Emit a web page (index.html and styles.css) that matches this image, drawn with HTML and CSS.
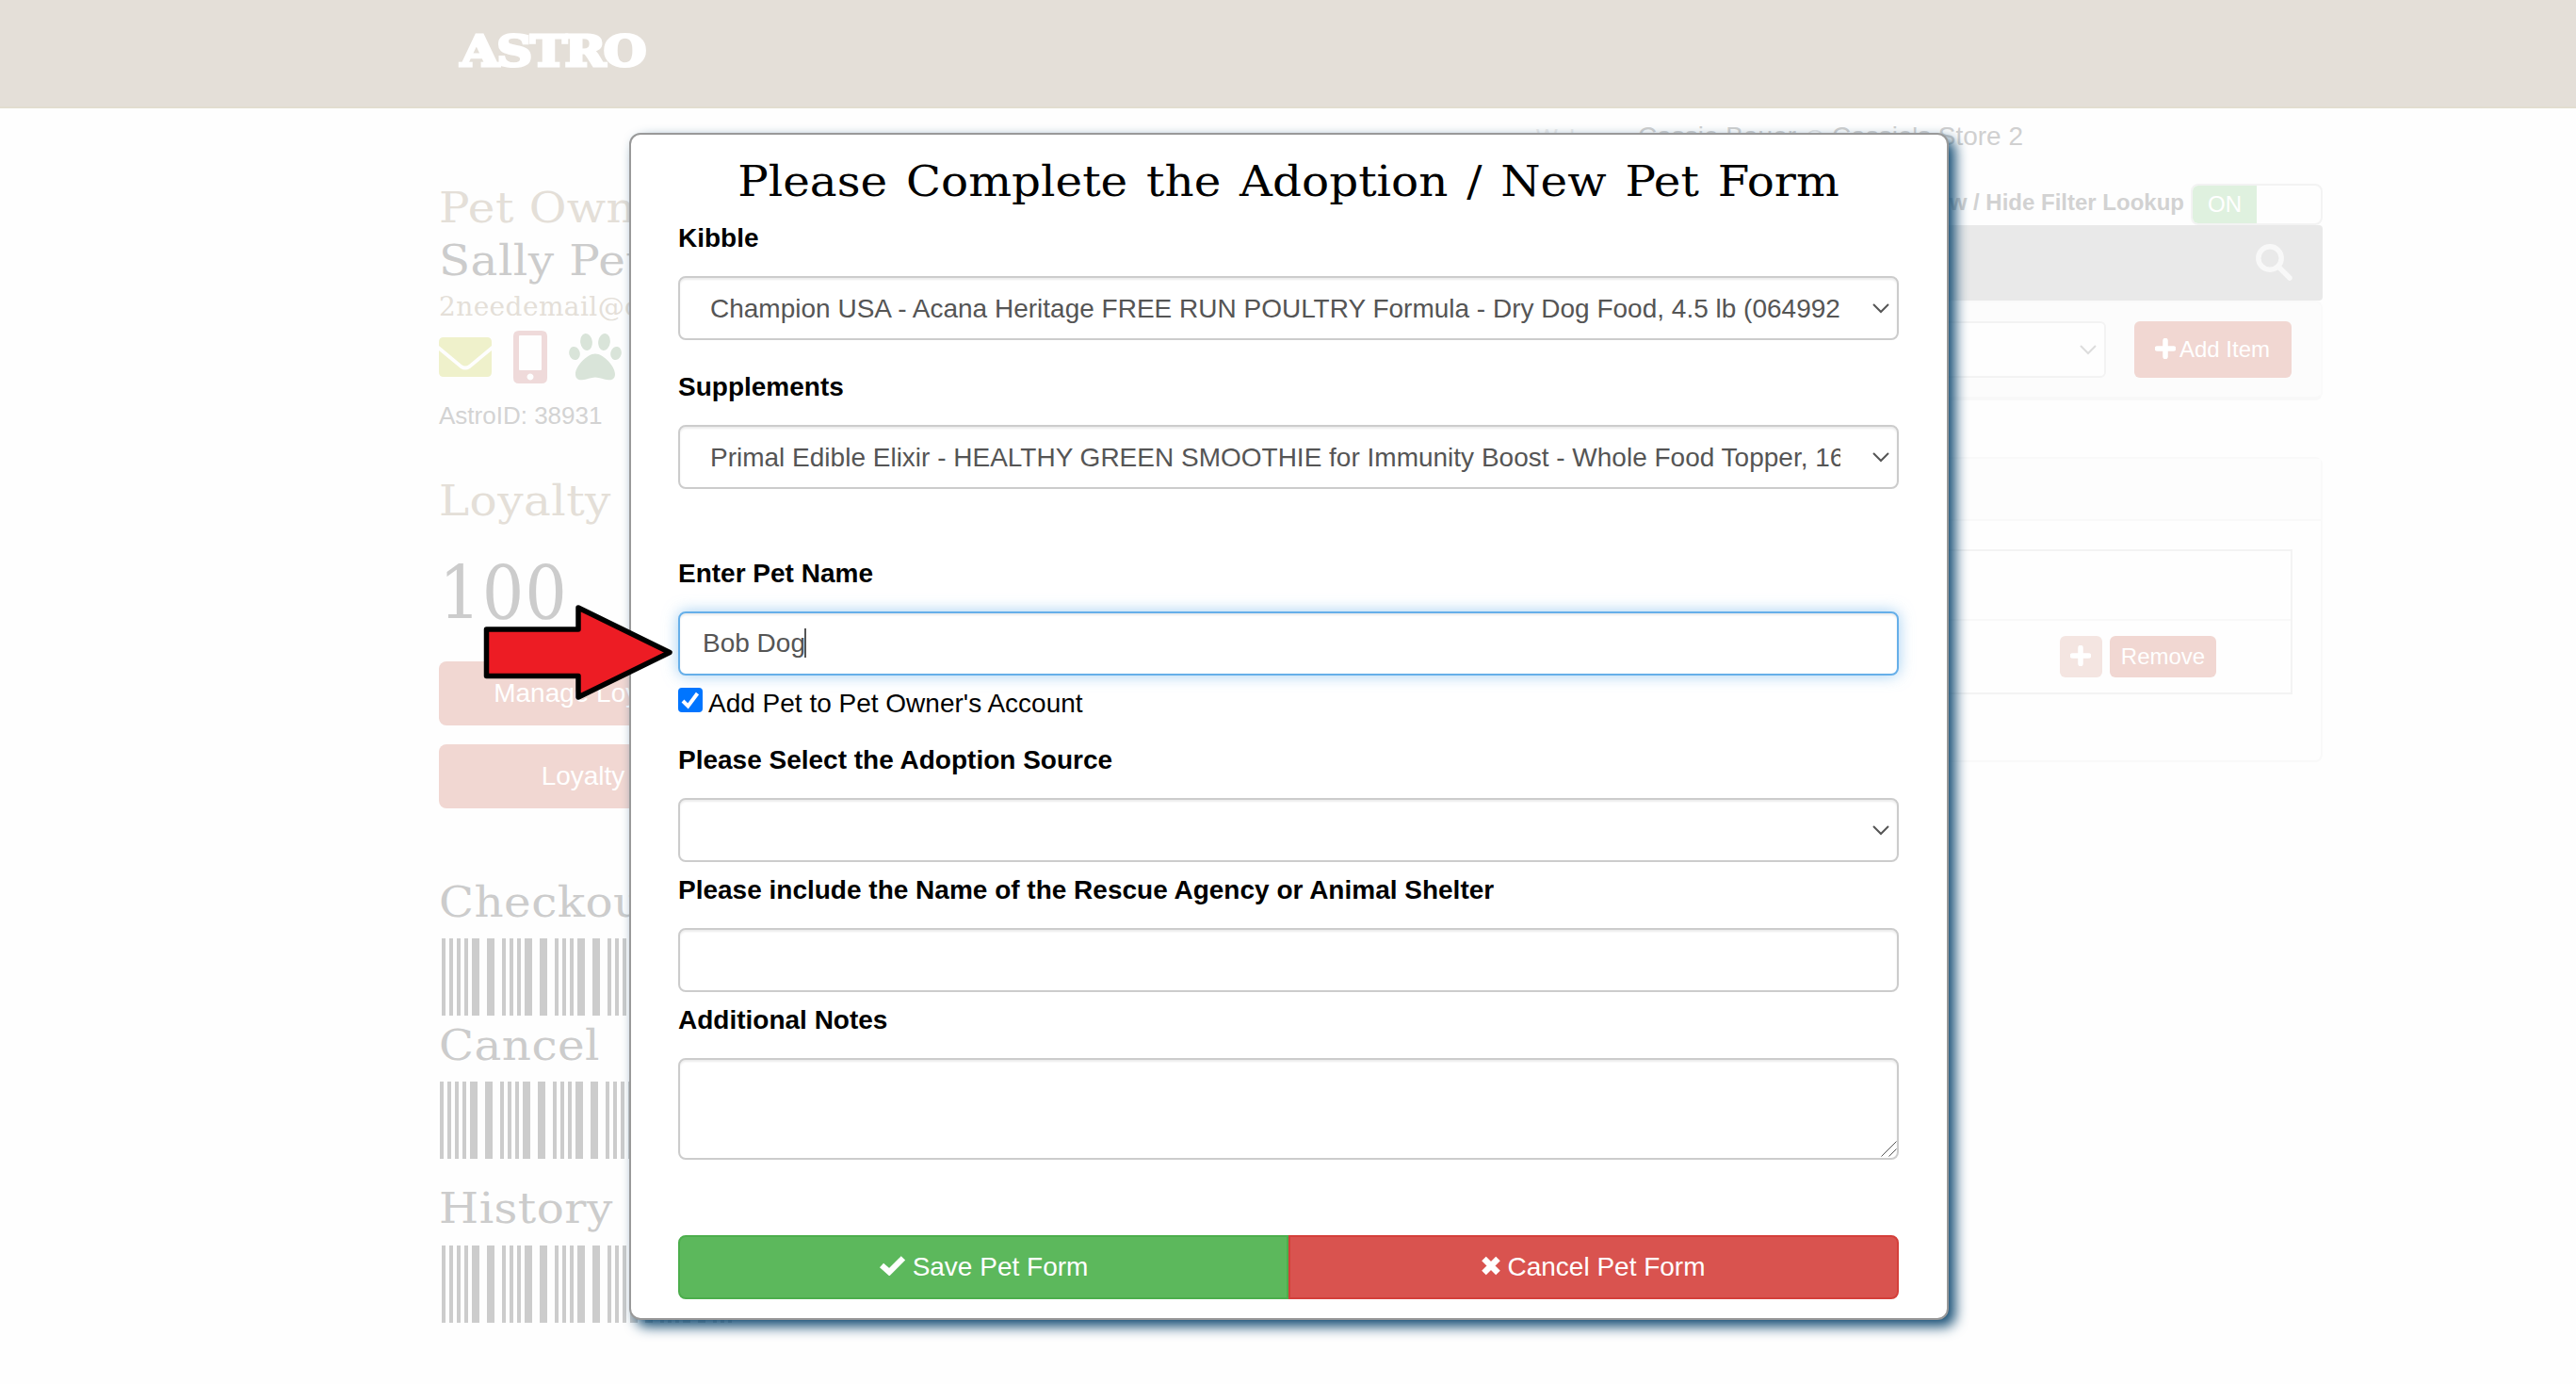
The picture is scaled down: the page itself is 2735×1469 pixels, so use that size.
FILE: index.html
```
<!DOCTYPE html>
<html lang="en">
<head>
    <meta charset="UTF-8">
    <title>Astro</title>
    <link rel="stylesheet" href="styles.css">
</head>
<body>

    <header class="navbar">
        <span class="logo">ASTRO</span>
    </header>

    <p class="welcome"><small>Welcome,</small> <span>Cassie Bauer <i>@</i> Cassie's Store 2</span></p>

    <div class="container">
        <aside class="sidebar">
            <h2 class="tan">Pet Owner</h2>
            <h2>Sally Pet</h2>
            <h4 class="tan">2needemail@c</h4>
            <div class="contact-icons">
                <svg class="icon-mail" viewBox="0 0 56 42"><path d="M5 0H51Q56 0 56 5V9L32 29Q28 32 24 29L0 9V5Q0 0 5 0ZM0 14L23 33Q28 36 33 33L56 14V37Q56 42 51 42H5Q0 42 0 37Z"/></svg>
                <svg class="icon-phone" viewBox="0 0 36 56"><path fill-rule="evenodd" d="M6 0H30Q36 0 36 6V50Q36 56 30 56H6Q0 56 0 50V6Q0 0 6 0ZM7 5Q6 5 6 6V41Q6 42 7 42H29Q30 42 30 41V6Q30 5 29 5ZM18 45.500a3.500 3.500 0 1 0 .01 0Z"/></svg>
                <svg class="icon-paw" viewBox="0 0 56 50"><ellipse cx="18.500" cy="9" rx="6.300" ry="9" transform="rotate(-8 18.500 9)"/><ellipse cx="37.500" cy="9" rx="6.300" ry="9" transform="rotate(8 37.500 9)"/><ellipse cx="6" cy="21" rx="5.700" ry="7.200" transform="rotate(-15 6 21)"/><ellipse cx="50" cy="21" rx="5.700" ry="7.200" transform="rotate(15 50 21)"/><path d="M28 21.500C37 21.500 49 35 49 43C49 48 46 49.500 42 49.200C37 49 33 46.500 28 46.500S19 49 14 49.200C10 49.500 7 48 7 43C7 35 19 21.500 28 21.500Z"/></svg>
            </div>
            <p class="astro-id">AstroID: 38931</p>

            <h2 class="tan loyalty">Loyalty</h2>
            <div class="points">100</div>
            <a class="btn-side manage">Manage Loyalty</a>
            <a class="btn-side">Loyalty</a>

            <h2 class="checkout">Checkout</h2>
            <div class="barcode"></div>
            <h2 class="cancel">Cancel</h2>
            <div class="barcode shifted"></div>
            <h2 class="history">History</h2>
            <div class="barcode last"></div>
        </aside>

        <main class="content">
            <div class="filter-toggle">
                <b>Show / Hide Filter Lookup</b>
                <span class="toggle"><span>ON</span></span>
            </div>
            <div class="search-bar">
                <svg viewBox="0 0 40 40"><circle cx="15" cy="15" r="12.200"/><path d="M24 24L36 36"/></svg>
            </div>
            <div class="add-panel">
                <div class="item-select">
                    <svg class="chevron" viewBox="0 0 18 11"><path d="M1 1L9 9L17 1"/></svg>
                </div>
                <a class="btn-add"><svg class="plus" viewBox="0 0 22 22"><path d="M11 2.500V19.500M2.500 11H19.500"/></svg>Add Item</a>
            </div>
            <div class="items-panel">
                <div class="items-heading"></div>
                <div class="items-table">
                    <div class="items-row"></div>
                    <div class="items-row odd">
                        <a class="btn-sm light"><svg class="plus" viewBox="0 0 22 22"><path d="M11 2.500V19.500M2.500 11H19.500"/></svg></a>
                        <a class="btn-sm">Remove</a>
                    </div>
                </div>
            </div>
        </main>
    </div>

    <!-- adoption / new pet dialog -->
    <form class="modal">
        <h2>Please Complete the Adoption / New Pet Form</h2>

        <label class="first">Kibble</label>
        <div class="select-wrap">
            <select class="form-control"><option>Champion USA - Acana Heritage FREE RUN POULTRY Formula - Dry Dog Food, 4.5 lb (064992</option></select>
            <svg class="chevron" viewBox="0 0 18 11"><path d="M1 1L9 9L17 1"/></svg>
        </div>

        <label class="supplements">Supplements</label>
        <div class="select-wrap">
            <select class="form-control"><option>Primal Edible Elixir - HEALTHY GREEN SMOOTHIE for Immunity Boost - Whole Food Topper, 16 oz</option></select>
            <svg class="chevron" viewBox="0 0 18 11"><path d="M1 1L9 9L17 1"/></svg>
        </div>

        <label class="pet-name">Enter Pet Name</label>
        <div class="form-control focused">Bob Dog<span class="caret"></span></div>

        <div class="checkbox">
            <svg viewBox="0 0 26 26"><rect width="26" height="26" rx="4"/><path d="M5 14L10.500 19.500L20.500 6"/></svg>
            <span>Add Pet to Pet Owner's Account</span>
        </div>

        <label class="source">Please Select the Adoption Source</label>
        <div class="select-wrap">
            <select class="form-control"><option></option></select>
            <svg class="chevron" viewBox="0 0 18 11"><path d="M1 1L9 9L17 1"/></svg>
        </div>

        <label>Please include the Name of the Rescue Agency or Animal Shelter</label>
        <input class="form-control" type="text">

        <label>Additional Notes</label>
        <div class="notes-wrap">
            <textarea class="form-control notes"></textarea>
            <svg class="grip" viewBox="0 0 17 17"><path d="M.5 16.500L16.500 .5M8.500 16.500L16.500 8.500"/></svg>
        </div>

        <div class="btn-group">
            <a class="btn-save"><svg viewBox="0 0 29 22"><path d="M2.500 10.500L11 18L26.500 2.500"/></svg>Save Pet Form</a>
            <a class="btn-cancel"><svg viewBox="0 0 20 21"><path d="M2.500 3L17.500 18M17.500 3L2.500 18"/></svg>Cancel Pet Form</a>
        </div>
    </form>

    <svg class="arrow" viewBox="0 0 204 106"><path d="M4.500 29H102V6L199 53.500L102 101V78.500H4.500Z"/></svg>

</body>
</html>
```

FILE: styles.css
```
* {
    box-sizing: border-box;
}

body {
    margin: 0;
    height: 1469px;
    overflow: hidden;
    position: relative;
    background: #fefefe;
    font-family: "Liberation Sans", Arial, sans-serif;
    font-size: 28px;
    color: #000;
}

h2, h4, p {
    margin: 0;
    font-weight: normal;
}

h2, h4 {
    font-family: "DejaVu Serif", serif;
    white-space: nowrap;
}

h2 {
    font-size: 44px;
    line-height: 57px;
    height: 56px;
    letter-spacing: .4px;
    transform: scaleX(1.1);
    transform-origin: left;
}

svg {
    display: block;
}

.navbar {
    height: 115px;
    padding: 25px 0 0 489px;
    background: #e4dfd8;
    border-bottom: 2px solid #e2ddd0;
}

.logo {
    display: inline-block;
    font: bold 45px/60px "DejaVu Serif", serif;
    letter-spacing: -2px;
    color: #fff;
    -webkit-text-stroke: 3px #fff;
    transform: scaleX(1.165);
    transform-origin: left;
}

.welcome {
    display: flex;
    align-items: baseline;
    height: 64px;
    padding: 12px 0 0 1631px;
    line-height: 36px;
    color: #d0d0d0;
    white-space: pre;
}

.welcome small {
    width: 108px;
    font-size: 24px;
    color: #ececec;
}

.welcome i {
    font-style: normal;
    font-size: 22px;
    color: #e4e4e4;
}

.container {
    display: flex;
    justify-content: space-between;
    width: 2000px;
    margin-left: 466px;
}

/* sidebar */
.sidebar {
    width: 460px;
    padding-top: 13px;
    color: #ccc;
}

.tan {
    color: #e4dfd8;
}

h4 {
    font-size: 28px;
    line-height: 44px;
    letter-spacing: .4px;
}

.contact-icons {
    display: flex;
    height: 60px;
}

.icon-mail {
    width: 56px;
    height: 42px;
    margin-top: 10px;
    fill: #eff1cb;
}

.icon-phone {
    width: 36px;
    height: 56px;
    margin: 3px 23px 0;
    fill: #efdada;
}

.icon-paw {
    width: 56px;
    height: 50px;
    margin-top: 6px;
    fill: #d9e4d9;
}

.astro-id {
    margin-top: 13px;
    font-size: 26px;
    line-height: 40px;
    color: #d3d3d3;
}

.loyalty {
    margin-top: 42px;
}

.points {
    margin: 26px 0 27px;
    font-family: "DejaVu Serif Condensed", "DejaVu Serif", serif;
    font-stretch: condensed;
    font-size: 78px;
    line-height: 90px;
    letter-spacing: 1px;
}

.btn-side {
    display: block;
    height: 68px;
    margin-bottom: 20px;
    border-radius: 8px;
    background: #f1d7d2;
    color: #fff;
    line-height: 68px;
    text-align: center;
    width: 306px;
}

.manage {
    padding-left: 8px;
}

.checkout {
    margin-top: 71px;
}

.cancel {
    margin-top: 3px;
}

.history {
    margin-top: 24px;
}

.barcode {
    width: 312px;
    height: 82px;
    margin: 11px 0 0 3px;
    padding-left: 8px;
    background:
        linear-gradient(#ccc, #ccc) 0 0 / 4px 100% no-repeat padding-box,
        repeating-linear-gradient(90deg, #ccc 0 4px, #fefefe 4px 8px, #ccc 8px 12px, #fefefe 12px 16px, #ccc 16px 20px, #fefefe 20px 24px, #ccc 24px 32px, #fefefe 32px 40px, #ccc 40px 48px, #fefefe 48px 56px) 0 0 content-box;
}

.shifted {
    margin-left: 1px;
}

.last {
    margin-top: 12px;
}

/* right side */
.content {
    width: 1300px;
    padding-top: 16px;
}

.filter-toggle {
    display: flex;
    justify-content: flex-end;
    height: 44px;
    font-size: 24px;
    line-height: 40px;
    color: #d2d2d2;
}

.toggle {
    width: 140px;
    height: 44px;
    margin-left: 7px;
    border: 2px solid #f3f3f3;
    border-radius: 8px;
    overflow: hidden;
}

.toggle span {
    display: block;
    width: 68px;
    height: 40px;
    background: #dff1df;
    color: #fff;
    text-align: center;
    line-height: 40px;
}

.search-bar {
    display: flex;
    justify-content: flex-end;
    height: 80px;
    padding: 20px 31px;
    border-radius: 4px;
    background: #e9e9e9;
}

.search-bar svg {
    width: 40px;
    height: 40px;
    fill: none;
    stroke: #f8f8f8;
    stroke-width: 5.5;
    stroke-linecap: round;
}

.add-panel {
    display: flex;
    justify-content: flex-end;
    gap: 30px;
    height: 106px;
    padding: 20px 31px 0;
    border: 2px solid #fafafa;
    border-bottom: 4px solid #f8f8f8;
    border-radius: 8px;
    background: #fcfcfc;
}

.item-select {
    display: flex;
    justify-content: flex-end;
    width: 700px;
    height: 60px;
    padding: 23px 8px;
    border: 2px solid #f3f3f3;
    border-radius: 6px;
    background: #fefefe;
}

.chevron {
    width: 18px;
    height: 11px;
    fill: none;
    stroke: #555;
    stroke-width: 2;
}

.item-select .chevron {
    stroke: #ddd;
}

.plus {
    width: 22px;
    height: 22px;
    stroke: #fff;
    stroke-width: 5.5;
    stroke-linecap: round;
}

.btn-add {
    display: flex;
    width: 167px;
    height: 60px;
    padding: 18px 0 0 22px;
    gap: 4px;
    border-radius: 6px;
    background: #f1d7d2;
    color: #fff;
    font-size: 24px;
    line-height: 24px;
    white-space: nowrap;
}

.items-panel {
    height: 324px;
    margin-top: 60px;
    border: 2px solid #f9f9f9;
    border-radius: 8px;
}

.items-heading {
    height: 66px;
    border-bottom: 2px solid #f9f9f9;
    background: #fdfdfd;
}

.items-table {
    margin: 30px 30px 0;
    border: 2px solid #f3f3f3;
}

.items-row {
    height: 72px;
}

.items-row.odd {
    display: flex;
    justify-content: flex-end;
    gap: 8px;
    height: 78px;
    padding: 16px 79px 0;
    border-top: 2px solid #f8f8f8;
}

.btn-sm {
    width: 113px;
    height: 44px;
    border-radius: 6px;
    background: #f1d7d2;
    color: #fff;
    font-size: 24px;
    line-height: 43px;
    text-align: center;
}

.btn-sm.light {
    width: 45px;
    padding: 10px 11px;
    background: #f4e5e1;
}

/* dialog */
.modal {
    position: absolute;
    left: 668px;
    top: 141px;
    width: 1401px;
    height: 1260px;
    padding: 21px 51px 0 50px;
    border: 2px solid #999;
    border-radius: 12px;
    background: #fff;
    box-shadow: 7px 7px 14px #124b72;
}

.modal h2 {
    text-align: center;
    letter-spacing: 0;
    word-spacing: 4px;
    transform-origin: center;
}

.modal label {
    display: block;
    margin: 10px 0 20px;
    font-weight: bold;
    line-height: 40px;
}

.modal label.first {
    margin-top: 13px;
}

.modal label.supplements {
    margin-top: 30px;
}

.modal label.pet-name {
    margin-top: 70px;
}

.modal label.source {
    margin-top: 20px;
}

.select-wrap, .notes-wrap {
    position: relative;
}

.select-wrap .chevron {
    position: absolute;
    right: 10px;
    top: 29px;
}

.form-control {
    display: block;
    width: 100%;
    height: 68px;
    margin: 0;
    padding: 0 24px;
    border: 2px solid #ccc;
    border-radius: 8px;
    outline: none;
    background: #fff;
    box-shadow: inset 0 2px 2px rgba(0, 0, 0, .075);
    color: #555;
    font: 28px/64px "Liberation Sans", Arial, sans-serif;
}

select.form-control {
    -webkit-appearance: none;
    appearance: none;
    padding: 1px 60px 0 32px;
}

.form-control.focused {
    border-color: #66afe9;
    box-shadow: inset 0 2px 2px rgba(0, 0, 0, .075), 0 0 16px rgba(102, 175, 233, .6);
}

.caret {
    display: inline-block;
    width: 2px;
    height: 31px;
    margin-left: -1px;
    vertical-align: -6px;
    background: #555;
}

.checkbox {
    display: flex;
    margin-top: 10px;
    line-height: 40px;
}

.checkbox svg {
    width: 26px;
    height: 26px;
    margin: 3px 6px 0 0;
    fill: #0075ff;
}

.checkbox path {
    fill: none;
    stroke: #fff;
    stroke-width: 4;
}

.notes {
    height: 108px;
    resize: none;
}

.grip {
    position: absolute;
    right: 2px;
    bottom: 3px;
    width: 17px;
    height: 17px;
    stroke: #555;
}

.btn-group {
    display: flex;
    margin-top: 80px;
}

.btn-group a {
    display: flex;
    justify-content: center;
    align-items: center;
    gap: 7px;
    width: 50%;
    height: 68px;
    color: #fff;
}

.btn-group svg {
    height: 21px;
    margin-bottom: 3px;
    fill: none;
    stroke: #fff;
    stroke-width: 6.5;
}

.btn-save {
    border: 2px solid #4cae4c;
    border-radius: 8px 0 0 8px;
    background: #5cb85c;
}

.btn-cancel {
    border: 2px solid #d43f3a;
    border-radius: 0 8px 8px 0;
    background: #d9534f;
}

.btn-save svg {
    width: 29px;
}

.btn-cancel svg {
    width: 20px;
}

.arrow {
    position: absolute;
    left: 512px;
    top: 639px;
    width: 204px;
    height: 106px;
    fill: #ed1c24;
    stroke: #000;
    stroke-width: 5.5;
    stroke-linejoin: round;
}
```
